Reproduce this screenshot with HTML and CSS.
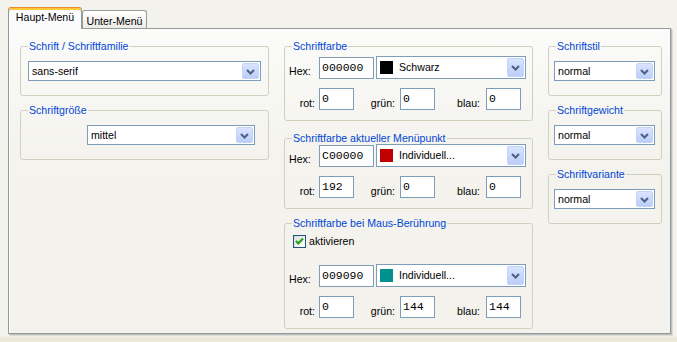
FILE: index.html
```html
<!DOCTYPE html>
<html lang="de">
<head>
<meta charset="utf-8">
<title>Schrift-Einstellungen</title>
<link rel="stylesheet" href="styles.css">
</head>
<body>
<div class="win">
  <div class="tabs">
    <div class="tab active">Haupt-Menü</div>
    <div class="tab">Unter-Menü</div>
  </div>
  <div class="panel">
    <div class="col col-l">
      <fieldset class="grp">
        <legend>Schrift / Schriftfamilie</legend>
        <div class="gb gb-l1">
          <div class="sel w-fam"><span class="txt">sans-serif</span><span class="btn"><svg width="9" height="6" viewBox="0 0 9 6"><path d="M1 1l3.5 3.5L8 1" fill="none" stroke="#4d6185" stroke-width="2"/></svg></span></div>
        </div>
      </fieldset>
      <fieldset class="grp">
        <legend>Schriftgröße</legend>
        <div class="gb gb-l2">
          <div class="sel w-size"><span class="txt">mittel</span><span class="btn"><svg width="9" height="6" viewBox="0 0 9 6"><path d="M1 1l3.5 3.5L8 1" fill="none" stroke="#4d6185" stroke-width="2"/></svg></span></div>
        </div>
      </fieldset>
    </div>

    <div class="col col-m">
      <fieldset class="grp">
        <legend>Schriftfarbe</legend>
        <div class="gb gb-m">
          <div class="row1">
            <span class="lb lb-hex">Hex:</span>
            <input class="in in-hex" value="000000">
            <div class="sel csel"><span class="sw sw-black"></span><span class="txt">Schwarz</span><span class="btn"><svg width="9" height="6" viewBox="0 0 9 6"><path d="M1 1l3.5 3.5L8 1" fill="none" stroke="#4d6185" stroke-width="2"/></svg></span></div>
          </div>
          <div class="row2">
            <span class="lb lb-r1">rot:</span><input class="in in-c" value="0">
            <span class="lb lb-r2">grün:</span><input class="in in-c" value="0">
            <span class="lb lb-r3">blau:</span><input class="in in-c" value="0">
          </div>
        </div>
      </fieldset>
      <fieldset class="grp grp-m2">
        <legend>Schriftfarbe aktueller Menüpunkt</legend>
        <div class="gb gb-m gb-m2">
          <div class="row1">
            <span class="lb lb-hex">Hex:</span>
            <input class="in in-hex" value="C00000">
            <div class="sel csel"><span class="sw sw-red"></span><span class="txt">Individuell...</span><span class="btn"><svg width="9" height="6" viewBox="0 0 9 6"><path d="M1 1l3.5 3.5L8 1" fill="none" stroke="#4d6185" stroke-width="2"/></svg></span></div>
          </div>
          <div class="row2">
            <span class="lb lb-r1">rot:</span><input class="in in-c" value="192">
            <span class="lb lb-r2">grün:</span><input class="in in-c" value="0">
            <span class="lb lb-r3">blau:</span><input class="in in-c" value="0">
          </div>
        </div>
      </fieldset>
      <fieldset class="grp grp-m3">
        <legend>Schriftfarbe bei Maus-Berührung</legend>
        <div class="gb gb-m gb-m3">
          <div class="chk">
            <span class="cb"><svg width="11" height="11" viewBox="0 0 11 11"><path d="M2 5l2.3 2.5L9 2.5" fill="none" stroke="#21a121" stroke-width="2.2"/></svg></span>
            <span class="chk-txt">aktivieren</span>
          </div>
          <div class="row1 row1-m3">
            <span class="lb lb-hex">Hex:</span>
            <input class="in in-hex" value="009090">
            <div class="sel csel"><span class="sw sw-teal"></span><span class="txt">Individuell...</span><span class="btn"><svg width="9" height="6" viewBox="0 0 9 6"><path d="M1 1l3.5 3.5L8 1" fill="none" stroke="#4d6185" stroke-width="2"/></svg></span></div>
          </div>
          <div class="row2">
            <span class="lb lb-r1">rot:</span><input class="in in-c" value="0">
            <span class="lb lb-r2">grün:</span><input class="in in-c" value="144">
            <span class="lb lb-r3">blau:</span><input class="in in-c" value="144">
          </div>
        </div>
      </fieldset>
    </div>

    <div class="col col-r">
      <fieldset class="grp">
        <legend>Schriftstil</legend>
        <div class="gb gb-r">
          <div class="sel w-r"><span class="txt">normal</span><span class="btn"><svg width="9" height="6" viewBox="0 0 9 6"><path d="M1 1l3.5 3.5L8 1" fill="none" stroke="#4d6185" stroke-width="2"/></svg></span></div>
        </div>
      </fieldset>
      <fieldset class="grp">
        <legend>Schriftgewicht</legend>
        <div class="gb gb-r">
          <div class="sel w-r"><span class="txt">normal</span><span class="btn"><svg width="9" height="6" viewBox="0 0 9 6"><path d="M1 1l3.5 3.5L8 1" fill="none" stroke="#4d6185" stroke-width="2"/></svg></span></div>
        </div>
      </fieldset>
      <fieldset class="grp">
        <legend>Schriftvariante</legend>
        <div class="gb gb-r">
          <div class="sel w-r"><span class="txt">normal</span><span class="btn"><svg width="9" height="6" viewBox="0 0 9 6"><path d="M1 1l3.5 3.5L8 1" fill="none" stroke="#4d6185" stroke-width="2"/></svg></span></div>
        </div>
      </fieldset>
    </div>
  </div>
</div>
</body>
</html>
```
FILE: styles.css
```css
* { box-sizing: border-box; }
html, body { margin: 0; padding: 0; }
body {
  width: 677px;
  height: 342px;
  overflow: hidden;
  background: linear-gradient(#f3f2ed 0, #f3f2ed 336px, #ece9d8 338px);
  font-family: "Liberation Sans", Arial, sans-serif;
  font-size: 10.6px;
  color: #000;
}
.win { padding: 7px 0 0 8px; }

/* Tabs */
.tabs {
  display: flex;
  align-items: flex-end;
  height: 21px;
}
.tab {
  line-height: 13px;
  text-align: center;
  white-space: nowrap;
  border: 1px solid #919b9c;
  border-bottom: none;
  border-radius: 3px 3px 0 0;
}
.tab.active {
  position: relative;
  z-index: 2;
  width: 74px;
  height: 22px;
  margin-bottom: -1px;
  padding-top: 3px;
  background: #fcfcfe;
  border-top: 1px solid #e68b2c;
  box-shadow: inset 0 2px 0 #ffc73c;
}
.tab:not(.active) {
  width: 65px;
  height: 18px;
  padding-top: 4px;
  background: linear-gradient(#ffffff, #ecebe6);
}

/* Panel */
.panel {
  width: 663px;
  height: 306px;
  display: flex;
  align-items: flex-start;
  gap: 15px;
  padding: 12px 0 0 11px;
  border: 1px solid #919b9c;
  background: linear-gradient(#fbfbf9, #f4f3ee 120px, #f3f2ed);
  box-shadow: 1px 1px 0 #b9bfbf, 2px 2px 0 #dedcd2, inset 1px 0 0 #ffffff;
}
.col-l { width: 249px; }
.col-m { width: 249px; }
.col-r { width: 114px; }

/* Group boxes */
.grp {
  margin: 0;
  padding: 0;
  min-width: 0;
  border: 1px solid #d0d0bf;
  border-radius: 3px;
}
.grp + .grp { margin-top: 9px; }
.grp legend {
  margin-left: 7px;
  padding: 0 1px;
  line-height: 11px;
  color: #0046d5;
  white-space: nowrap;
}
.gb-l1 { padding: 9px 0 14px 7px; }
.gb-l2 { padding: 9px 0 14px 66px; }
.gb-r { padding: 9px 0 14px 5px; }

/* Middle groups */
.gb-m { padding: 4px 0 10px 4px; }
.grp.grp-m2 { margin-top: 12px; }
.gb-m.gb-m2 { padding-top: 0; }
.grp.grp-m3 { margin-top: 9px; }
.gb-m.gb-m3 { padding-top: 4px; }

.row1 {
  display: flex;
  align-items: center;
  height: 23px;
}
.row1-m3 { margin-top: 14px; }
.row2 {
  display: flex;
  align-items: flex-end;
  height: 22px;
  margin-top: 9px;
}
.lb {
  line-height: 13px;
  white-space: nowrap;
}
.lb-hex { width: 30px; align-self: flex-end; padding-bottom: 1px; }
.lb-r1 { width: 30px; text-align: right; padding-right: 4px; }
.lb-r2 { width: 46px; text-align: right; padding-right: 5px; }
.lb-r3 { width: 51px; text-align: right; padding-right: 6px; }

/* Inputs */
.in {
  display: block;
  height: 22px;
  margin: 0;
  padding: 3px 2px 4px;
  border: 1px solid #7f9db9;
  background: #fff;
  font-family: "Liberation Mono", "Courier New", monospace;
  font-size: 11.5px;
  line-height: 13px;
  color: #000;
  outline: none;
}
.in-hex { width: 55px; margin-right: 2px; }
.in-c { width: 35px; }

/* Selects */
.sel {
  display: flex;
  align-items: stretch;
  height: 20px;
  border: 1px solid #7f9db9;
  background: #fff;
}
.sel .txt {
  flex: 1;
  padding-left: 3px;
  line-height: 18px;
  white-space: nowrap;
  overflow: hidden;
}
.sel .btn {
  width: 17px;
  margin: 1px;
  display: flex;
  align-items: center;
  justify-content: center;
  border: 1px solid #c3d3fa;
  border-radius: 2px;
  background: linear-gradient(#d9e4fe, #bccdf8);
}
.sel .btn svg { display: block; margin-top: 1px; }
.w-fam { width: 233px; }
.w-size { width: 168px; }
.w-r { width: 101px; }

.csel {
  width: 150px;
  height: 23px;
  align-items: center;
}
.csel .btn { align-self: stretch; }
.csel .txt { padding-left: 6px; line-height: 21px; }
.sw {
  width: 13px;
  height: 13px;
  margin-left: 3px;
  flex: none;
}
.sw-black { background: #000000; }
.sw-red { background: #c00000; }
.sw-teal { background: #009090; }

/* Checkbox */
.chk {
  display: flex;
  align-items: center;
  height: 17px;
  padding-left: 4px;
}
.cb {
  width: 13px;
  height: 13px;
  display: flex;
  align-items: center;
  justify-content: center;
  border: 1px solid #1c5180;
  background: linear-gradient(135deg, #dcdcd7, #ffffff);
}
.cb svg { display: block; }
.chk-txt { margin-left: 3px; line-height: 13px; }
```
